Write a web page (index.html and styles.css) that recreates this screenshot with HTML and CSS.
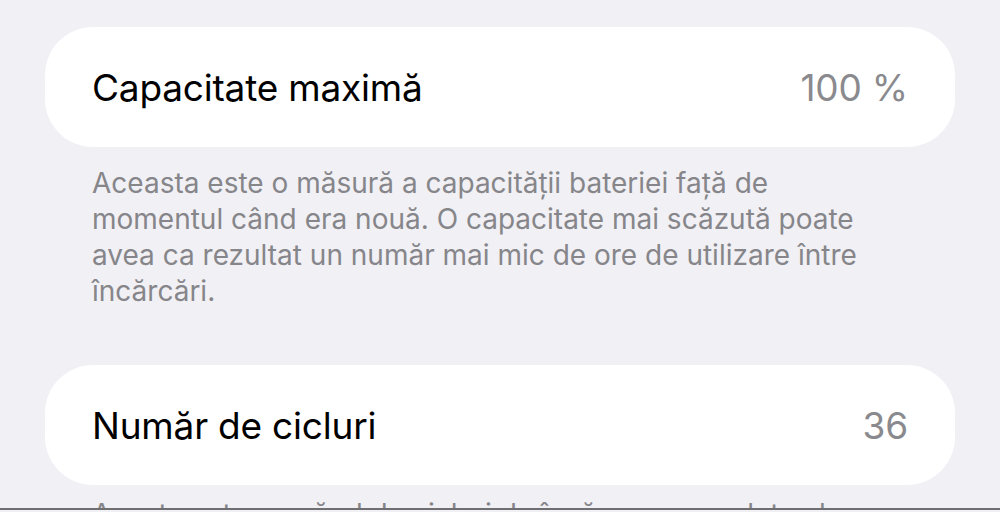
FILE: index.html
```html
<!DOCTYPE html>
<html>
<head>
    <title>Baterie</title>
    <link rel="stylesheet" href="styles.css">
</head>
<body>
    <div class="screen">
        <div class="cell">
            <span class="label">Capacitate maximă</span>
            <span class="value">100 %</span>
        </div>
        <p class="footer">Aceasta este o măsură a capacității bateriei față de momentul când era nouă. O capacitate mai scăzută poate avea ca rezultat un număr mai mic de ore de utilizare între încărcări.</p>

        <div class="cell second">
            <span class="label">Număr de cicluri</span>
            <span class="value">36</span>
        </div>
        <p class="footer last">Acesta este numărul de cicluri de încărcare complete ale bateriei.</p>
    </div>
</body>
</html>
```

FILE: styles.css
```css
html, body {
    margin: 0;
    padding: 0;
    background: #f1f0f5;
}
body {
    font-family: Inter, "Liberation Sans", sans-serif;
    -webkit-font-smoothing: antialiased;
}
.screen {
    height: 510px;
    overflow: hidden;
    padding: 27px 45px 0 45px;
    box-sizing: border-box;
    border-bottom: 2px solid #6f6f72;
}
.cell {
    height: 120px;
    background: #ffffff;
    border-radius: 48px;
    display: flex;
    align-items: center;
    justify-content: space-between;
    padding: 0 47px;
    font-size: 37px;
    letter-spacing: -0.2px;
}
.cell.second {
    margin-top: 56px;
}
.label {
    color: #000000;
}
.value {
    color: #8a8a8e;
}
.footer {
    margin: 18px 0 0 0;
    padding: 0 60px 0 47px;
    font-size: 28px;
    line-height: 36px;
    color: #86868a;
}
.footer.last {
    margin-top: 11px;
}
```
